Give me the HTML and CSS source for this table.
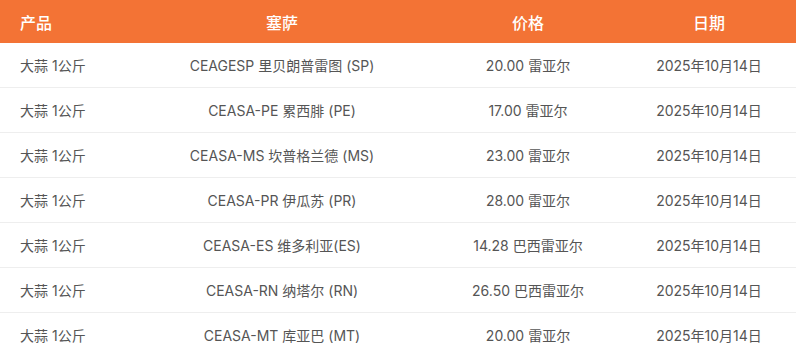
FILE: index.html
```html
<!DOCTYPE html>
<html lang="zh">
<head>
<meta charset="utf-8">
<link rel="stylesheet" href="styles.css">
</head>
<body>
<table class="prices">
  <colgroup>
    <col class="c1"><col class="c2"><col class="c3"><col class="c4">
  </colgroup>
  <thead>
    <tr><th class="left">产品</th><th>塞萨</th><th>价格</th><th>日期</th></tr>
  </thead>
  <tbody>
    <tr><td class="left">大蒜 1公斤</td><td>CEAGESP 里贝朗普雷图 (SP)</td><td>20.00 雷亚尔</td><td>2025年10月14日</td></tr>
    <tr><td class="left">大蒜 1公斤</td><td>CEASA-PE 累西腓 (PE)</td><td>17.00 雷亚尔</td><td>2025年10月14日</td></tr>
    <tr><td class="left">大蒜 1公斤</td><td>CEASA-MS 坎普格兰德 (MS)</td><td>23.00 雷亚尔</td><td>2025年10月14日</td></tr>
    <tr><td class="left">大蒜 1公斤</td><td>CEASA-PR 伊瓜苏 (PR)</td><td>28.00 雷亚尔</td><td>2025年10月14日</td></tr>
    <tr><td class="left">大蒜 1公斤</td><td>CEASA-ES 维多利亚(ES)</td><td>14.28 巴西雷亚尔</td><td>2025年10月14日</td></tr>
    <tr><td class="left">大蒜 1公斤</td><td>CEASA-RN 纳塔尔 (RN)</td><td>26.50 巴西雷亚尔</td><td>2025年10月14日</td></tr>
    <tr><td class="left">大蒜 1公斤</td><td>CEASA-MT 库亚巴 (MT)</td><td>20.00 雷亚尔</td><td>2025年10月14日</td></tr>
  </tbody>
</table>
</body>
</html>
```
FILE: styles.css
```css
html, body {
  margin: 0;
  padding: 0;
  background: #ffffff;
}
body {
  font-family: Inter, "Noto Sans CJK SC", sans-serif;
  color: #555555;
}
.prices {
  width: 796px;
  border-collapse: collapse;
  table-layout: fixed;
}
.c1 { width: 130px; }
.c2 { width: 304px; }
.c3 { width: 188px; }
.c4 { width: 174px; }
.prices th {
  background: #f37335;
  color: #ffffff;
  font-weight: 500;
  font-size: 16px;
  height: 43px;
  padding: 0;
  text-align: center;
}
.prices td {
  font-size: 14px;
  height: 44px;
  padding: 0;
  text-align: center;
  border-bottom: 1px solid #eeeeee;
  white-space: nowrap;
}
.prices .left {
  text-align: left;
  padding-left: 20px;
}
```
